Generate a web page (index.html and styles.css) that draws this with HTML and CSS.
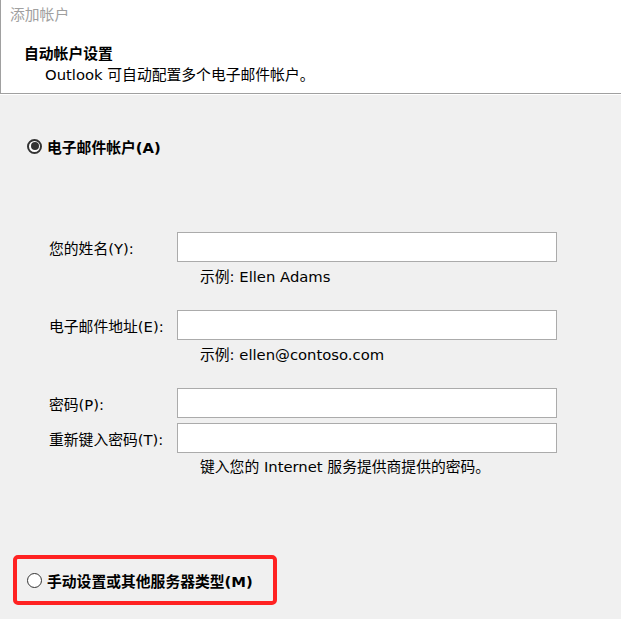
FILE: index.html
```html
<!DOCTYPE html>
<html lang="zh-CN">
<head>
    <meta charset="UTF-8">
    <meta name="viewport" content="width=device-width, initial-scale=1.0">
    <title>添加帐户</title>
    <link rel="stylesheet" href="styles.css">
</head>
<body>
    <div id="dialog">
        <!-- 顶部说明 -->
        <div id="top-panel">
            <div class="window-title">添加帐户</div>
            <div class="page-heading">自动帐户设置</div>
            <div class="page-desc">Outlook 可自动配置多个电子邮件帐户。</div>
        </div>

        <div id="main-panel">
            <label class="radio-row first-option">
                <span class="radio checked"></span>
                <span class="radio-label">电子邮件帐户(A)</span>
            </label>

            <!-- 帐户信息 -->
            <div id="account-form">
                <div class="field">
                    <span class="field-label">您的姓名(Y):</span>
                    <input class="text-input" type="text">
                </div>
                <div class="hint">示例: Ellen Adams</div>

                <div class="field group-gap">
                    <span class="field-label">电子邮件地址(E):</span>
                    <input class="text-input" type="text">
                </div>
                <div class="hint">示例: ellen@contoso.com</div>

                <div class="field group-gap">
                    <span class="field-label">密码(P):</span>
                    <input class="text-input" type="password">
                </div>
                <div class="field pair-gap">
                    <span class="field-label">重新键入密码(T):</span>
                    <input class="text-input" type="password">
                </div>
                <div class="hint hint-tight">键入您的 Internet 服务提供商提供的密码。</div>
            </div>

            <div class="highlight-box">
                <label class="radio-row">
                    <span class="radio"></span>
                    <span class="radio-label">手动设置或其他服务器类型(M)</span>
                </label>
            </div>
        </div>
    </div>
</body>
</html>
```

FILE: styles.css
```css
body {
    margin: 0;
    padding: 0;
    background: #ffffff;
    font-family: 'DejaVu Sans', 'Noto Sans CJK SC', sans-serif;
    font-size: 14.8px;
    color: #000;
    overflow: hidden;
}

#dialog {
    width: 621px;
    height: 619px;
    display: flex;
    flex-direction: column;
}

#top-panel {
    height: 94px;
    box-sizing: border-box;
    background: #fff;
    border-left: 1px solid #a0a0a0;
    border-bottom: 1px solid #a0a0a0;
}

.window-title {
    height: 30px;
    line-height: 30px;
    padding-left: 9px;
    color: #a0a0a0;
}

.page-heading {
    margin-top: 13px;
    padding-left: 23px;
    line-height: 21px;
    font-weight: bold;
}

.page-desc {
    padding-left: 44px;
    line-height: 21px;
}

#main-panel {
    flex: 1;
    background: #f0f0f0;
    border-top: 1px solid #fff;
    padding-top: 41px;
}

.radio-row {
    display: flex;
    align-items: center;
    height: 20px;
}

.first-option {
    padding-left: 27px;
}

.radio {
    width: 13px;
    height: 13px;
    border: 1px solid #333;
    border-radius: 50%;
    background: #fff;
    position: relative;
    margin-right: 5px;
}

.radio.checked {
    border-width: 2px;
    width: 11px;
    height: 11px;
}

.radio.checked::after {
    content: '';
    position: absolute;
    top: 1.5px;
    left: 1.5px;
    width: 8px;
    height: 8px;
    border-radius: 50%;
    background: #333;
}

.radio-label {
    font-weight: bold;
}

#account-form {
    margin-top: 76px;
    padding-left: 49px;
}

.field {
    display: flex;
    align-items: center;
    height: 30px;
}

.field-label {
    width: 128px;
}

.text-input {
    width: 380px;
    height: 30px;
    box-sizing: border-box;
    margin: 0;
    padding: 0 4px;
    border: 1px solid #ababab;
    background: #fff;
    outline: none;
}

.group-gap {
    margin-top: 23px;
}

.pair-gap {
    margin-top: 5px;
}

.hint {
    margin-top: 5px;
    padding-left: 151px;
    line-height: 20px;
}

.hint-tight {
    margin-top: 4px;
}

.highlight-box {
    margin-top: 78px;
    margin-left: 13px;
    width: 264px;
    height: 50px;
    box-sizing: border-box;
    border: 4px solid #ff2222;
    border-radius: 5px;
    padding-left: 10px;
    display: flex;
    align-items: center;
}
```
